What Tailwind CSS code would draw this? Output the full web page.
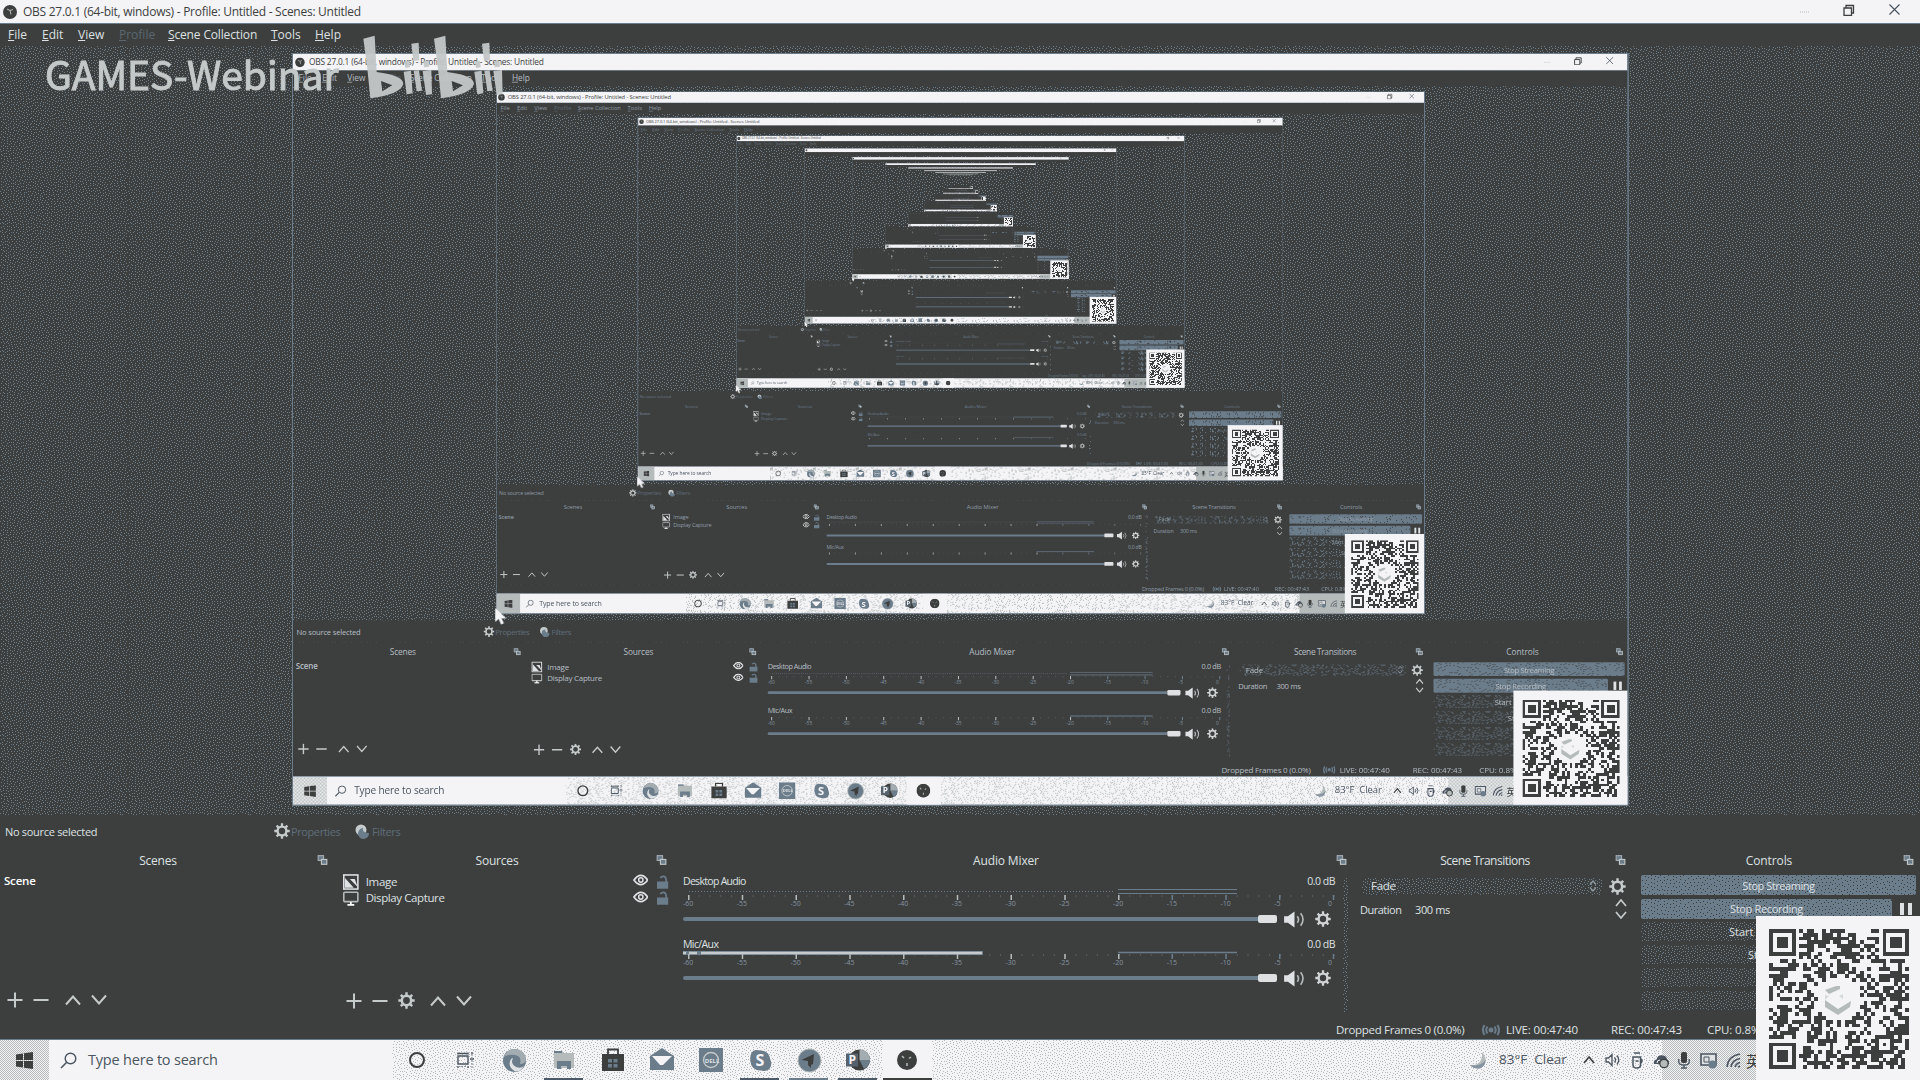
<!DOCTYPE html>
<html lang="en">
<head>
<meta charset="utf-8">
<title>OBS 27.0.1</title>
<script src="https://cdn.jsdelivr.net/npm/@tailwindcss/browser@4"></script>
</head>
<body class="m-0 overflow-hidden bg-[#3d3f3e]">

<!-- shared symbols -->
<svg class="absolute size-0" aria-hidden="true">
  <defs>
    <pattern id="dots" width="128" height="128" patternUnits="userSpaceOnUse"><path fill="#6b7c8b" shape-rendering="crispEdges" data-density="0.15"/></pattern>
    <pattern id="holes" width="128" height="128" patternUnits="userSpaceOnUse"><path fill="#3d3f3e" shape-rendering="crispEdges" data-density="0.08"/></pattern>
    <pattern id="greys" width="128" height="128" patternUnits="userSpaceOnUse"><path fill="#b5bbbb" shape-rendering="crispEdges" data-density="0.14"/></pattern>
    <pattern id="check" width="2" height="2" patternUnits="userSpaceOnUse">
      <path fill="#b5bbbb" shape-rendering="crispEdges" d="M0 0h1v1h-1zM1 1h1v1h-1z"/>
    </pattern>
    <symbol id="gear" viewBox="0 0 16 16"><circle cx="8" cy="8" r="4.4" fill="none" stroke="currentColor" stroke-width="2.4"/><path d="M8 .3v3M8 12.700v3M.3 8h3M12.700 8h3M2.600 2.600l2 2M11.400 11.400l2 2M2.600 13.400l2-2M11.400 4.600l2-2" stroke="currentColor" stroke-width="2.300"/></symbol>
    <symbol id="plus" viewBox="0 0 16 16"><path d="M8 0.500v15M.5 8h15" stroke="currentColor" stroke-width="2"/></symbol>
    <symbol id="minus" viewBox="0 0 16 16"><path d="M.5 8h15" stroke="currentColor" stroke-width="2"/></symbol>
    <symbol id="up" viewBox="0 0 16 16"><path d="M1 12.500l7-8 7 8" fill="none" stroke="currentColor" stroke-width="2"/></symbol>
    <symbol id="down" viewBox="0 0 16 16"><path d="M1 3.500l7 8 7-8" fill="none" stroke="currentColor" stroke-width="2"/></symbol>
    <symbol id="pop" viewBox="0 0 12 12"><rect x="2" y="1.500" width="5" height="4.500" fill="#6b7c8b" stroke="#a3acb1"/><rect x="5" y="5" width="5" height="4.500" fill="#6b7c8b" stroke="#c5cacb"/></symbol>
    <symbol id="eye" viewBox="0 0 16 12"><path d="M1 6q7-9.500 14 0q-7 9.500-14 0z" fill="none" stroke="#dfe2e4" stroke-width="1.800"/><circle cx="8" cy="6" r="2.200" fill="none" stroke="#dfe2e4" stroke-width="1.500"/></symbol>
    <symbol id="lock" viewBox="0 0 14 14"><path d="M1 6.500h11.500V14H1z" fill="#6b7c8b"/><path d="M4.500 3q1-2 3.500-1.800Q10.500 1.500 10.500 7" fill="none" stroke="#6b7c8b" stroke-width="1.800"/></symbol>
    <symbol id="speaker" viewBox="0 0 24 18"><path d="M1 5.500h4L12 0.500v17L5 12.500H1z" fill="#dfe2e4"/><path d="M15 5.500q2.500 3.500 0 7M18.500 2.500q5 6.500 0 13" fill="none" stroke="#b5bbbb" stroke-width="1.700"/></symbol>
    <symbol id="ticks" viewBox="0 0 652 5"><path stroke="#6b7c8b" stroke-width="1" stroke-dasharray="1 9.760" d="M5 1h647"/><path stroke="#b5bbbb" stroke-width="5" stroke-dasharray="1.500 52.250" d="M5 2.500h438"/><path stroke="#6b7c8b" stroke-width="5" stroke-dasharray="1.500 52.250" d="M488.500 2.500h163"/></symbol>
    <symbol id="qr" viewBox="0 0 37 37"><path id="qrPath" fill="#3d3f3e" shape-rendering="crispEdges"/></symbol>
  </defs>
</svg>

<template id="obsWindow">
  <div data-window class="relative flex h-[1080px] w-[1920px] flex-col font-['Open_Sans','Noto_Sans',sans-serif] text-[12px] leading-none">
    <!-- title bar -->
    <div class="flex h-[24px] shrink-0 items-center border-b border-[#6b7c8b] bg-[#f4f4f7] pl-[3px] text-[#3d3f3e]">
      <svg class="size-[14px]" viewBox="0 0 14 14"><circle cx="7" cy="7" r="7" fill="#3d3f3e"/><path d="M4 4l3 1.500 3-1M7 5.500l1 4" stroke="#b5bbbb" fill="none"/></svg>
      <span class="ml-[6px] flex-1 whitespace-nowrap text-[12px] tracking-[-0.270px]">OBS 27.0.1 (64-bit, windows) - Profile: Untitled - Scenes: Untitled</span>
      <svg class="mr-[33px] h-[12px] w-[10px]" viewBox="0 0 10 12"><path d="M0 6h9" stroke="#b5bbbb" stroke-dasharray="1 1"/></svg>
      <svg class="mr-[34px] mb-1 size-[12px]" viewBox="0 0 12 12"><path d="M1 4h7.500v7.500H1zM3 4V1.500h7.500V9H8.500" fill="none" stroke="#3d3f3e" stroke-width="1.300"/></svg>
      <svg class="mr-[20px] mb-1 size-[11px]" viewBox="0 0 11 11"><path d="M.5.5l10 10M10.500.5l-10 10" stroke="#4b5560" stroke-width="1.200"/></svg>
    </div>
    <!-- menu bar -->
    <div class="flex h-[22px] shrink-0 items-center bg-[#3d3f3e] pl-[8px]">
      <span class="w-[34px]"><u>F</u>ile</span>
      <span class="w-[36px]"><u>E</u>dit</span>
      <span class="w-[41px]"><u>V</u>iew</span>
      <span class="w-[49px] text-[#5a6771]"><u>P</u>rofile</span>
      <span class="w-[103px] whitespace-nowrap tracking-[-0.150px]"><u>S</u>cene Collection</span>
      <span class="w-[44px]"><u>T</u>ools</span>
      <span><u>H</u>elp</span>
    </div>
    <!-- preview canvas -->
    <div class="relative h-[769px] shrink-0">
      <div data-slot class="absolute left-[293px] top-[8px] h-[1080px] w-[1920px] origin-top-left scale-[.695]"></div>
    </div>
    <!-- source info -->
    <div class="flex h-[32px] shrink-0 items-center bg-[#3d3f3e] pl-[5px]">
      <span class="w-[269px] text-[11px] tracking-[-0.300px]">No source selected</span>
      <svg class="size-[16px] text-[#c5cacb]"><use href="#gear"/></svg>
      <span class="w-[65px] pl-[1px] text-[11px] tracking-[-0.400px] text-[#5f6d79]">Properties</span>
      <svg class="size-[15px]" viewBox="0 0 15 15"><circle cx="6" cy="6" r="5.500" fill="#c5cacb"/><path d="M14 8a5.500 5.500 0 1 1-6-5q-1 5 6 5z" transform="translate(0 1)" fill="#6b7c8b"/></svg>
      <span class="pl-[2px] text-[11px] tracking-[-0.400px] text-[#5f6d79]">Filters</span>
    </div>
    <!-- docks -->
    <div class="grid h-[173px] shrink-0 grid-cols-[330px_340px_678px_283px_289px] bg-[#3d3f3e]">
      <section class="flex flex-col">
        <div class="flex h-[27px] items-center"><span class="w-[316px] text-center tracking-[-0.200px]">Scenes</span><svg class="size-[13px]"><use href="#pop"/></svg></div>
        <div data-scene class="h-[118px] pl-[4px] pt-[1px] text-[11.500px] font-semibold tracking-[-0.200px]">Scene</div>
        <div class="flex items-center pl-[7px] text-[#c5cacb]">
          <svg class="size-[16px]"><use href="#plus"/></svg><svg class="ml-[10px] size-[16px]"><use href="#minus"/></svg>
          <svg class="ml-[16px] size-[16px]"><use href="#up"/></svg><svg class="ml-[10px] size-[16px]"><use href="#down"/></svg>
        </div>
      </section>
      <section class="flex flex-col pl-[10px]">
        <div class="flex h-[27px] items-center"><span class="w-[314px] text-center tracking-[-0.200px]">Sources</span><svg class="ml-px size-[13px]"><use href="#pop"/></svg></div>
        <div class="flex h-[118px] flex-col">
          <div class="flex h-[15px] items-center pl-[3px]">
            <svg class="h-[16px] w-[16px]" viewBox="0 0 16 16"><rect x=".8" y=".8" width="14.400" height="14.400" fill="#3d3f3e" stroke="#dfe2e4" stroke-width="1.600"/><path d="M2 4v10h9zM7 5h5l3 8z" fill="#dfe2e4"/></svg>
            <span class="ml-[7px] w-[273px] text-[11.500px] tracking-[-0.300px]">Image</span>
            <svg class="-mt-[3px] h-[12px] w-[16px]"><use href="#eye"/></svg><svg class="ml-[8px] size-[14px]"><use href="#lock"/></svg>
          </div>
          <div class="flex h-[18px] items-center pl-[3px]">
            <svg class="h-[15px] w-[16px]" viewBox="0 0 16 15"><rect x=".8" y="1.200" width="14.400" height="9.500" rx="1" fill="none" stroke="#b5bbbb" stroke-width="1.600"/><path d="M8 11v3M4.500 14h7" stroke="#fff" stroke-width="1.800"/></svg>
            <span class="ml-[7px] w-[273px] text-[11.500px] tracking-[-0.400px]">Display Capture</span>
            <svg class="-mt-[2px] h-[12px] w-[16px]"><use href="#eye"/></svg><svg class="ml-[8px] size-[14px]"><use href="#lock"/></svg>
          </div>
        </div>
        <div class="flex items-center pl-[6px] text-[#c5cacb]">
          <svg class="size-[16px]"><use href="#plus"/></svg><svg class="ml-[10px] size-[16px]"><use href="#minus"/></svg><svg class="ml-[10px] size-[17px]"><use href="#gear"/></svg>
          <svg class="ml-[15px] size-[16px]"><use href="#up"/></svg><svg class="ml-[10px] size-[16px]"><use href="#down"/></svg>
        </div>
      </section>
      <section class="flex flex-col pl-[13px]">
        <div class="flex h-[27px] items-center"><span class="w-[646px] text-center tracking-[-0.150px]">Audio Mixer</span><svg class="ml-[6px] size-[13px]"><use href="#pop"/></svg></div>
        <div class="-mt-px flex gap-[8px]">
          <div class="w-[652px]">
            <div class="h-[63px]">
              <div class="flex h-[16px] items-center justify-between text-[10.500px]"><span class="tracking-[-0.700px]">Desktop Audio</span><span class="tracking-[-0.500px]">0.0 dB</span></div>
              <svg class="block h-[7px] w-[652px]" viewBox="0 0 652 7"><path d="M6 2.500h424" stroke="#6b7c8b" stroke-dasharray="1 2"/><path d="M435 .500h119M435 4.500h119" stroke="#6b7c8b" stroke-width="1.200"/></svg>
              <svg class="-mt-px block h-[5px] w-[652px]"><use href="#ticks"/></svg>
              <div data-scale class="flex h-[8px] text-[7px] text-[#8593a0]"></div>
              <div class="mt-[6px] flex h-[10px] items-center"><div class="h-[4px] w-[575px] rounded-l-full bg-[#6b7c8b]"></div><div class="h-[8px] w-[19px] rounded-[2px] bg-[#dfe0e2]"></div><svg class="ml-[6px] h-[17px] w-[23px]"><use href="#speaker"/></svg><svg class="ml-[9px] size-[16px] text-[#d0d4d5]"><use href="#gear"/></svg></div>
            </div>
            <div class="h-[60px]">
              <div class="flex h-[15px] items-center justify-between text-[10.500px]"><span class="pt-[2px] tracking-[-0.600px]">Mic/Aux</span><span class="pt-px tracking-[-0.500px]">0.0 dB</span></div>
              <svg class="block h-[4px] w-[652px]" viewBox="0 0 652 4"><g data-live><path d="M0 2h300" stroke="#6b7c8b" stroke-width="4"/><path d="M0 2h3M6 2h8M18 2h281" stroke="#c5cacb" stroke-width="2.500"/></g><path d="M435 1.500h119" stroke="#6b7c8b" stroke-width="1.500"/></svg>
              <svg class="-mt-px block h-[5px] w-[652px]"><use href="#ticks"/></svg>
              <div data-scale class="flex h-[8px] text-[7px] text-[#8593a0]"></div>
              <div class="mt-[6px] flex h-[10px] items-center"><div class="h-[4px] w-[575px] rounded-l-full bg-[#6b7c8b]"></div><div class="h-[8px] w-[19px] rounded-[2px] bg-[#dfe0e2]"></div><svg class="ml-[6px] h-[17px] w-[23px]"><use href="#speaker"/></svg><svg class="ml-[9px] size-[16px] text-[#d0d4d5]"><use href="#gear"/></svg></div>
            </div>
          </div>
          <svg class="mt-[4px] h-[135px] w-[5px]"><rect width="6" height="135" fill="url(#dots)"/></svg>
        </div>
      </section>
      <section class="flex flex-col pl-[9px]">
        <div class="flex h-[27px] items-center"><span class="w-[256px] text-center tracking-[-0.500px]">Scene Transitions</span><svg class="ml-px size-[13px]"><use href="#pop"/></svg></div>
        <div class="flex h-[24px] items-center pl-[5px]">
          <div class="relative flex h-[17px] w-[240px] items-center justify-between pl-[9px] pr-[5px]"><svg class="absolute inset-0 size-full"><rect width="100%" height="100%" fill="url(#dots)"/></svg><span class="relative text-[11.500px] tracking-[-0.300px]">Fade</span><svg class="relative h-[12px] w-[8px]" viewBox="0 0 8 12"><path d="M1 4.500L4 1l3 3.500M1 7.500L4 11l3-3.500" fill="none" stroke="#8d99a2" stroke-width="1.300"/></svg></div>
          <svg class="ml-[7px] size-[17px] text-[#c5cacb]"><use href="#gear"/></svg>
        </div>
        <div class="-mt-px flex h-[24px] items-center pl-[3px]"><span class="w-[55px] text-[11px] tracking-[-0.500px]">Duration</span><span class="w-[200px] text-[11px] tracking-[-0.400px]">300 ms</span><svg class="h-[20px] w-[12px]" viewBox="0 0 12 20"><path d="M1 7l5-6 5 6M1 13l5 6 5-6" fill="none" stroke="#c5cacb" stroke-width="1.700"/></svg></div>
      </section>
      <section class="flex flex-col pl-[10px]">
        <div class="flex h-[27px] items-center"><span class="w-[256px] text-center tracking-[-0.100px]">Controls</span><svg class="ml-[5px] size-[13px]"><use href="#pop"/></svg></div>
        <div class="mt-px flex flex-col gap-[4px]">
          <div class="relative flex h-[20px] w-[275px] items-center justify-center rounded-[2px] bg-[#6b7c8b]"><svg class="absolute inset-0 size-full"><rect width="100%" height="100%" fill="url(#holes)"/></svg><span class="relative text-[11px] tracking-[-0.450px]">Stop Streaming</span></div>
          <div class="flex h-[19px] items-center"><div class="relative flex h-[20px] w-[251px] items-center justify-center rounded-[2px] bg-[#6b7c8b]"><svg class="absolute inset-0 size-full"><rect width="100%" height="100%" fill="url(#holes)"/></svg><span class="relative text-[11px] tracking-[-0.350px]">Stop Recording</span></div><div class="ml-[8px] flex gap-[4px]"><i class="h-[12px] w-[4px] bg-[#dfe2e4]"></i><i class="h-[12px] w-[4px] bg-[#dfe2e4]"></i></div></div>
          <div class="relative h-[19px] w-[252px] text-[11px] leading-[19px]"><svg class="absolute inset-0 size-full"><rect width="100%" height="100%" fill="url(#dots)"/></svg><span class="relative whitespace-nowrap pl-[88px]">Start</span></div>
          <div class="relative h-[19px] w-[252px] text-[11px] leading-[19px]"><svg class="absolute inset-0 size-full"><rect width="100%" height="100%" fill="url(#dots)"/></svg><span class="relative whitespace-nowrap pl-[107px]">St</span></div>
          <div class="relative h-[19px] w-[252px]"><svg class="absolute inset-0 size-full"><rect width="100%" height="100%" fill="url(#dots)"/></svg></div>
          <div class="relative h-[19px] w-[252px]"><svg class="absolute inset-0 size-full"><rect width="100%" height="100%" fill="url(#dots)"/></svg></div>
        </div>
      </section>
    </div>
    <!-- status bar -->
    <div class="flex h-[19px] shrink-0 items-center whitespace-nowrap bg-[#3d3f3e] pl-[1336px] text-[11.500px]">
      <span class="w-[146px] tracking-[-0.300px]">Dropped Frames 0 (0.0%)</span>
      <svg class="h-[12px] w-[18px]" viewBox="0 0 18 12"><circle cx="9" cy="6" r="2.500" fill="#6b7c8b"/><path d="M5.500 2.500q-2.500 3.500 0 7M12.500 2.500q2.500 3.500 0 7M2.500 1q-3 5 0 10M15.500 1q3 5 0 10" fill="none" stroke="#6b7c8b" stroke-width="2"/></svg>
      <span class="ml-[6px] w-[105px] tracking-[-0.150px]">LIVE: 00:47:40</span><span class="w-[96px] tracking-[-0.100px]">REC: 00:47:43</span><span class="tracking-[-0.100px]">CPU: 0.8%</span>
    </div>
    <!-- taskbar -->
    <div class="relative flex h-[41px] shrink-0 items-center border-t border-[#6b7c8b] bg-[#f4f4f7] text-[#3d3f3e]">
      <svg class="absolute inset-y-0 left-[392px] h-full w-[1370px]"><rect width="1270" height="42" fill="url(#greys)"/><rect x="1270" width="100" height="42" fill="url(#check)"/></svg>
      <div class="relative flex h-full w-[49px] items-center justify-center"><svg class="absolute inset-0 size-full"><rect width="100%" height="100%" fill="url(#check)"/></svg><svg class="relative size-[17px]" viewBox="0 0 17 17"><path d="M0 2.500L7 1.500V8H0zM8 1.300L17 0v8H8zM0 9h7v6.500L0 14.500zM8 9h9v8l-9-1.300z" fill="#3d3f3e"/></svg></div>
      <div class="flex w-[343px] items-center pl-[11px]"><svg class="size-[17px]" viewBox="0 0 17 17"><circle cx="10.500" cy="6.500" r="5.300" fill="none" stroke="#4b5560" stroke-width="1.400"/><path d="M6.500 10.500L1 16" stroke="#4b5560" stroke-width="1.600"/></svg><span class="ml-[11px] pt-px text-[14.500px] tracking-[-0.200px] text-[#4b5560]">Type here to search</span></div>
      <div class="relative grid h-full grid-cols-[repeat(11,49.1px)] items-center justify-items-center">
        <svg class="size-[18px]" viewBox="0 0 18 18"><circle cx="9" cy="9" r="7" fill="none" stroke="#3d3f3e" stroke-width="2"/></svg>
        <svg class="size-[18px]" viewBox="0 0 18 18"><path d="M1 5h10v8H1zM1 1.500v2M11 1.500v2M1 15v2M11 15v2M1 2.500h10M13 8h4M15 1v2" fill="none" stroke="#4b5560" stroke-width="1.400"/><path d="M1 15.500h10M15 3v14" fill="none" stroke="#8d99a2" stroke-width="1.200" stroke-dasharray="2 1"/></svg>
        <svg class="size-[25px]" viewBox="0 0 25 25"><circle cx="12.500" cy="12.500" r="11.500" fill="#6b7c8b"/><path d="M2 9Q5 1 13 1q10 1 11 11-1 4-6 4 2-8-5-9-7-1-11 2z" fill="#a3acb1"/><path d="M11 10q-3 6 3 9 5 2 8-1-3 6-9 5.500Q6 19 8 13q1-3 3-3z" fill="#dfe2e4"/></svg>
        <svg class="size-[22px]" viewBox="0 0 22 22"><path d="M1 2h8l2 2h10v15H1z" fill="#b5bbbb"/><path d="M1 2h8v2H1zM4 12h14v8h-4v-3h-6v3H4z" fill="#6b7c8b"/></svg>
        <svg class="size-[24px]" viewBox="0 0 24 24"><path d="M7 6V1.500h10V6" fill="none" stroke="#3d3f3e" stroke-width="1.800"/><path d="M1 6h22v17H1z" fill="#3d3f3e"/><path d="M7 11h4v3.500H7zM12.500 11h4v3.500h-4zM7 16h4v3.500H7zM12.500 16h4v3.500h-4z" fill="#6b7c8b"/></svg>
        <svg class="size-[24px]" viewBox="0 0 24 24"><path d="M0 8L12 0l12 8v14H0z" fill="#6b7c8b"/><path d="M2 8h20l-9 9h-3z" fill="#f4f4f7"/></svg>
        <svg class="size-[24px]" viewBox="0 0 24 24"><path d="M0 0h24v24H0z" fill="#6b7c8b"/><circle cx="12" cy="12" r="7.500" fill="none" stroke="#c5cacb" stroke-width="1.300"/><text x="5.800" y="14.500" class="text-[6px] font-bold" fill="#dfe2e4">DELL</text></svg>
        <svg class="size-[23px]" viewBox="0 0 23 23"><path d="M7 1q3 0 5 .5Q20 2 21.500 11q2 5-1 9-4 3-8 1.500Q3 22 1.500 13 0 2 7 1z" fill="#6b7c8b"/><text x="6.500" y="17.300" class="text-[16px] font-bold" fill="#f4f4f7">S</text></svg>
        <svg class="size-[25px]" viewBox="0 0 25 25"><circle cx="12.500" cy="12.500" r="11.500" fill="#6b7c8b" stroke="#b5bbbb"/><path d="M4.500 12l5-2.500L17 6l-1 10-2 1v3l-3-3v-4z" fill="#3d3f3e"/></svg>
        <svg class="size-[24px]" viewBox="0 0 24 24"><circle cx="13.500" cy="12" r="10.500" fill="#3d3f3e"/><path d="M13.500 1.500A10.500 10.500 0 0 1 24 12H13.500z" fill="#a3acb1"/><path d="M13.500 12H24a10.500 10.500 0 0 1-6 9z" fill="#6b7c8b"/><path d="M0 5.500h12v13H0z" fill="#55626d"/><text x="2.500" y="16" class="text-[12px] font-bold" fill="#f4f4f7">P</text></svg>
        <div class="flex size-full items-center justify-center bg-[#f4f4f7]"><svg class="size-[20px]" viewBox="0 0 20 20"><circle cx="10" cy="10" r="10" fill="#3d3f3e"/><path d="M5 6l2 2M14 7l-2 1.500M10 13v3" stroke="#b5bbbb" stroke-width="1.500"/></svg></div>
        <div data-live class="absolute bottom-0 left-[152px] h-[2px] w-[39px] bg-[#4b5a66]"></div>
        <div data-live class="absolute bottom-0 left-[348px] h-[2px] w-[39px] bg-[#4b5a66]"></div>
        <div data-live class="absolute bottom-0 left-[397px] h-[2px] w-[39px] bg-[#6b7c8b]"></div>
        <div data-live class="absolute bottom-0 left-[446px] h-[2px] w-[39px] bg-[#4b5a66]"></div>
        <div data-live class="absolute bottom-0 left-[491px] h-[2px] w-[49px] bg-[#3d3f3e]"></div>
      </div>
      <div class="relative ml-[538px] flex items-center">
        <svg class="size-[17px]" viewBox="0 0 17 17"><path d="M12 0q8 10-1 16-6 2-11-3 13 1 12-13z" fill="#b5bbbb"/><path d="M15.500 8q0 5-4.500 8-6 2-11-3 11 2 15.500-5z" fill="#8593a0"/></svg>
        <span class="ml-[12px] w-[84px] whitespace-pre text-[13.500px] text-[#4b5560]">83°F  Clear</span>
        <svg class="size-[12px]" viewBox="0 0 12 12"><path d="M1 9l5-6 5 6" fill="none" stroke="#3d3f3e" stroke-width="1.600"/></svg>
        <svg class="ml-[10px] h-[14px] w-[17px]" viewBox="0 0 17 14"><path d="M1 5h2.500L7 1.500v11L3.500 9H1zM9.500 4.500q2 2.500 0 5M12 2.500q3.500 4.500 0 9" fill="none" stroke="#4b5560" stroke-width="1.300"/></svg>
        <svg class="ml-[9px] h-[17px] w-[12px]" viewBox="0 0 12 17"><path d="M2 5h7.500v8q0 3-3.700 3T2 13zM3 1h6M10 7q2 2 0 4M4.500 9h3" fill="none" stroke="#4b5560" stroke-width="1.500"/></svg>
        <svg class="ml-[10px] size-[17px]" viewBox="0 0 17 17"><path d="M1 12Q0 8 3.500 7.500 5 2.500 9.500 3.500q4 0 4.500 4 2.500 1 2 4.500z" fill="#4b5560"/><circle cx="11" cy="11.500" r="4.200" fill="#b5bbbb" stroke="#3d3f3e" stroke-width="1.300"/><path d="M4 11q0-3 3-3" stroke="#f4f4f7" fill="none"/></svg>
        <svg class="ml-[8px] h-[17px] w-[12px]" viewBox="0 0 12 17"><rect x="3" y="0" width="6" height="11" rx="2" fill="#3d3f3e"/><path d="M.8 7v3q0 3 5.200 3t5.200-3V7M6 13v3M3 16h6" fill="none" stroke="#4b5560" stroke-width="1.300"/></svg>
        <svg class="ml-[10px] size-[17px]" viewBox="0 0 17 17"><path d="M1 2h15v11H1z" fill="#dfe2e4" stroke="#4b5560" stroke-width="1.600"/><path d="M4 5h5v5H4z" fill="none" stroke="#4b5560"/><circle cx="12.500" cy="12.500" r="4" fill="#6b7c8b"/></svg>
        <svg class="ml-[9px] size-[15px]" viewBox="0 0 15 15"><path d="M1 14Q2 3 14 1M5 14q1-7 9-8.500M9 14q1-3.500 5-4.500M12 14l2-1" fill="none" stroke="#4b5560" stroke-width="1.600"/></svg>
        <span class="ml-[5px] font-['Noto_Sans_CJK_SC',sans-serif] text-[15px]">英</span>
      </div>
    </div>
    <!-- QR card -->
    <div class="absolute bottom-0 right-0 flex size-[164px] items-center justify-center bg-[#f4f4f7]">
      <svg class="ml-px mt-px size-[140px]" viewBox="0 0 37 37"><use href="#qr"/></svg>
      <svg class="absolute left-[62px] top-[62px] size-[40px]" viewBox="0 0 40 40"><path d="M7 12l11-4h4v3l-11 5z" fill="#b5bbbb"/><path d="M7 22l13 9 13-8-1 6-12 8-13-8z" fill="#b5bbbb"/><path d="M7 17l4 1-4 4zM21 18l4-2v5z" fill="#d5d9da"/></svg>
    </div>
    <!-- mouse pointer -->
    <svg data-pointer class="absolute left-[291px] top-[797px] hidden h-[24px] w-[17px]" viewBox="0 0 17 24"><path d="M0 0v20l5-4 3.500 8 4-2-3.500-7H16z" fill="#f4f4f7"/></svg>
  </div>
</template>

<main class="relative h-[1080px] w-[1920px] overflow-hidden">
  <svg class="absolute inset-0 size-full"><rect width="1920" height="1080" fill="url(#dots)"/></svg>
  <div id="desktop" class="absolute inset-0"></div>
  <!-- stream watermark -->
  <div class="absolute left-[45px] top-[47px] whitespace-nowrap font-['Noto_Sans_CJK_SC',sans-serif] text-[39px] leading-[52px] font-normal text-[#c3c8c8] [-webkit-text-stroke:1px_#c3c8c8]">GAMES-Webinar</div>
  <svg class="absolute left-[350px] top-[22px] h-[80px] w-[160px] opacity-95" viewBox="0 0 480 240" fill="#c3c8c8">
    <g id="bili"><path fill-rule="evenodd" d="M40 50L74 41L80 150Q160 160 160 186Q150 218 61 229L52 140zM93 177L97 208L127 190z"/><path d="M184 65L206 62L208 115L190 117zM161 149L183 146L188 214L170 217zM191 146L207 145L216 206L200 208zM218 147L244 144L246 217L228 219zM163 118L178 116L180 136L166 138zM220 118L236 116L238 134L222 136z"/></g>
    <use href="#bili" x="212"/>
  </svg>
</main>

<script>
  let seed = 20210727;
  const rnd = () => (seed = (seed * 1103515245 + 12345) % 2147483648) / 2147483648;

  // stipple tiles: a flat tone turned into scattered single pixels by error diffusion
  document.querySelectorAll('[data-density]').forEach(path => {
    const S = 128, tone = +path.dataset.density;
    let err = new Float32Array(S + 2), out = '';
    for (let y = -16; y < S; y++) {
      const next = new Float32Array(S + 2);
      let carry = 0;
      for (let i = 0; i < S; i++) {
        const x = y & 1 ? S - 1 - i : i, step = y & 1 ? -1 : 1;
        const v = tone + err[x + 1] + carry;
        const on = v > 0.5 + (rnd() - 0.5) * 0.2;
        const e = v - (on ? 1 : 0);
        carry = e * 7 / 16;
        next[x + 1 - step] += e * 3 / 16;
        next[x + 1] += e * 5 / 16;
        next[x + 1 + step] += e / 16;
        if (on && y >= 0) out += `M${x} ${y}h1v1h-1z`;
      }
      err = next;
    }
    path.setAttribute('d', out);
  });

  const N = 37;
  let d = '';
  const ring = (x, y, cx, cy) => Math.max(Math.abs(x - cx), Math.abs(y - cy));
  for (let y = 0; y < N; y++) for (let x = 0; x < N; x++) {
    let on = rnd() < 0.52;
    for (const [cx, cy] of [[3, 3], [33, 3], [3, 33]]) {
      const r = ring(x, y, cx, cy);
      if (r <= 4) on = r !== 2 && r !== 4;
    }
    const a = ring(x, y, 30, 30);
    if (a <= 2) on = a !== 1;
    if (ring(x, y, 18, 18) <= 5 && Math.abs(x - 18) + Math.abs(y - 18) < 9) on = false;
    if (on) d += `M${x} ${y}h1.02v1.02h-1.02z`;
  }
  document.getElementById('qrPath').setAttribute('d', d);

  // each captured display contains the window itself, one step smaller
  const tpl = document.getElementById('obsWindow');
  const tints = ['text-[#dde1e3]', 'text-[#b5bdc3]', 'text-[#8f9ca7]', 'text-[#6b7c8b]'];
  let host = document.getElementById('desktop');
  for (let depth = 0; depth < 13; depth++) {
    const win = tpl.content.firstElementChild.cloneNode(true);
    win.classList.add(tints[Math.min(depth, 3)]);
    if (depth < 2) win.querySelectorAll('[data-scale]').forEach(row => {
      for (let v = -60; v <= 0; v += 5) {
        const s = document.createElement('span');
        s.className = 'w-[53.75px] shrink-0';
        s.textContent = v;
        row.appendChild(s);
      }
      row.lastChild.className = 'w-[7px] shrink-0';
    });
    if (depth === 0) {
      win.querySelector('[data-scene]').classList.add('text-white');
    } else {
      win.classList.add('outline-2', 'outline-[#6b7c8b]');
      win.querySelector('[data-pointer]').classList.remove('hidden');
      win.querySelectorAll('[data-live]').forEach(n => n.remove());
    }
    if (depth > 4) win.querySelectorAll('span, text, [data-scene]').forEach(n => { n.textContent = ''; });
    host.appendChild(win);
    host = win.querySelector('[data-slot]');
  }
</script>
</body>
</html>
